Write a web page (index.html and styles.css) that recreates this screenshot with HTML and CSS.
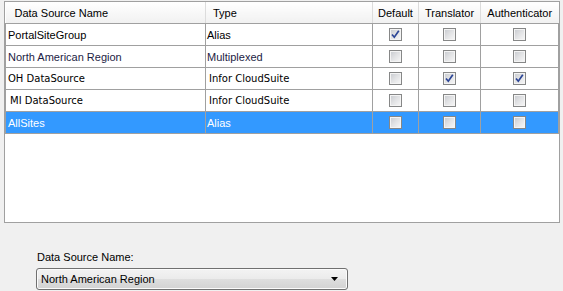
FILE: index.html
```html
<!DOCTYPE html>
<html>
<head>
<meta charset="utf-8">
<link rel="stylesheet" href="styles.css">
</head>
<body>
<div class="grid-frame">
  <table class="grid">
    <colgroup>
      <col class="c-name"><col class="c-type"><col class="c-def"><col class="c-tr"><col class="c-auth">
    </colgroup>
    <thead>
      <tr>
        <th class="h-left h-name">Data Source Name</th>
        <th class="h-left h-type">Type</th>
        <th>Default</th>
        <th>Translator</th>
        <th>Authenticator</th>
      </tr>
    </thead>
    <tbody>
      <tr>
        <td class="name">PortalSiteGroup</td>
        <td class="type">Alias</td>
        <td class="chk"><span class="cb checked"><svg width="11" height="11" viewBox="0 0 11 11"><path d="M2 5.5 L4.3 8.2 L8.8 1.8" fill="none" stroke="#2b4596" stroke-width="1.7"/></svg></span></td>
        <td class="chk"><span class="cb"></span></td>
        <td class="chk"><span class="cb"></span></td>
      </tr>
      <tr class="navy">
        <td class="name">North American Region</td>
        <td class="type">Multiplexed</td>
        <td class="chk"><span class="cb"></span></td>
        <td class="chk"><span class="cb"></span></td>
        <td class="chk"><span class="cb"></span></td>
      </tr>
      <tr class="alt-font">
        <td class="name">OH DataSource</td>
        <td class="type">Infor CloudSuite</td>
        <td class="chk"><span class="cb"></span></td>
        <td class="chk"><span class="cb checked"><svg width="11" height="11" viewBox="0 0 11 11"><path d="M2 5.5 L4.3 8.2 L8.8 1.8" fill="none" stroke="#2b4596" stroke-width="1.7"/></svg></span></td>
        <td class="chk"><span class="cb checked"><svg width="11" height="11" viewBox="0 0 11 11"><path d="M2 5.5 L4.3 8.2 L8.8 1.8" fill="none" stroke="#2b4596" stroke-width="1.7"/></svg></span></td>
      </tr>
      <tr class="alt-font">
        <td class="name name-mi">MI DataSource</td>
        <td class="type type-mi">Infor CloudSuite</td>
        <td class="chk"><span class="cb"></span></td>
        <td class="chk"><span class="cb"></span></td>
        <td class="chk"><span class="cb"></span></td>
      </tr>
      <tr class="selected">
        <td class="name">AllSites</td>
        <td class="type">Alias</td>
        <td class="chk"><span class="cb"></span></td>
        <td class="chk"><span class="cb"></span></td>
        <td class="chk"><span class="cb"></span></td>
      </tr>
    </tbody>
  </table>
</div>
<div class="field">
  <div class="field-label">Data Source Name:</div>
  <div class="combo">
    <span class="combo-text">North American Region</span>
    <svg class="combo-arrow" width="7" height="4" viewBox="0 0 7 4"><path d="M0 0 H7 L3.5 4 Z" fill="#000"/></svg>
  </div>
</div>
</body>
</html>
```
FILE: styles.css
```css
html, body {
  margin: 0;
  padding: 0;
}
body {
  background: #f0f0f0;
  font-family: "Liberation Sans", Arial, sans-serif;
  font-size: 11px;
  color: #000;
  width: 563px;
  height: 291px;
  overflow: hidden;
}
.grid-frame {
  margin: 1px 0 0 4px;
  width: 556px;
  height: 222px;
  box-sizing: border-box;
  border: 1px solid #a0a0a0;
  background: #fff;
}
.grid {
  border-collapse: collapse;
  table-layout: fixed;
  width: 553px;
}
.c-name { width: 200px; }
.c-type { width: 167px; }
.c-def { width: 46px; }
.c-tr { width: 62px; }
.c-auth { width: 78px; }
.grid th {
  height: 21px;
  padding: 0;
  font-weight: normal;
  text-align: center;
  background: linear-gradient(#ffffff, #f1f1f1);
  border-right: 1px solid #dcdcdc;
  border-bottom: 1px solid #a0a0a0;
  white-space: nowrap;
  vertical-align: middle;
}
.grid th:last-child { border-right: none; }
.grid th.h-left { text-align: left; }
.grid th.h-name { padding-left: 9px; }
.grid th.h-type { padding-left: 7px; }
.grid td {
  height: 21px;
  padding: 0;
  border-right: 1px solid #a0a0a0;
  border-bottom: 1px solid #a0a0a0;
  white-space: nowrap;
  overflow: hidden;
  vertical-align: middle;
}
.grid td:first-child { border-left: 1px solid #a0a0a0; }
.grid td.name { padding-left: 2px; }
.grid td.type { padding-left: 1px; }
.grid td.name-mi { padding-left: 4px; }
.grid td.type-mi { padding-left: 4px; }
.grid td.chk { text-align: center; line-height: 0; }
.navy td { color: #1c1c44; }
.alt-font td {
  font-family: "DejaVu Sans", sans-serif;
  font-size: 10px;
}
.alt-font td.type { padding-left: 3px; }
.selected td {
  background: #3399ff;
  color: #fff;
}
.cb {
  display: inline-block;
  width: 13px;
  height: 13px;
  box-sizing: border-box;
  border: 1px solid #868787;
  background: linear-gradient(135deg, #c6c9ce 0%, #e2e3e5 50%, #f8f8f8 100%);
  box-shadow: inset 0 0 0 1px #f4f4f4;
  vertical-align: middle;
  position: relative;
}
.cb svg {
  display: block;
}
.field {
  padding: 27px 0 0 37px;
}
.field-label {
  height: 14px;
  line-height: 14px;
  margin-bottom: 4px;
}
.combo {
  width: 312px;
  height: 22px;
  box-sizing: border-box;
  margin-left: -1px;
  border: 1px solid #707070;
  border-radius: 3px;
  background: linear-gradient(#f3f3f3 0%, #ebebeb 50%, #dedede 51%, #d2d2d2 100%);
  box-shadow: inset 0 0 0 1px #fbfbfb;
  display: flex;
  align-items: center;
  justify-content: space-between;
  padding: 0 9px 0 4px;
}
.combo-arrow { display: block; }
```
